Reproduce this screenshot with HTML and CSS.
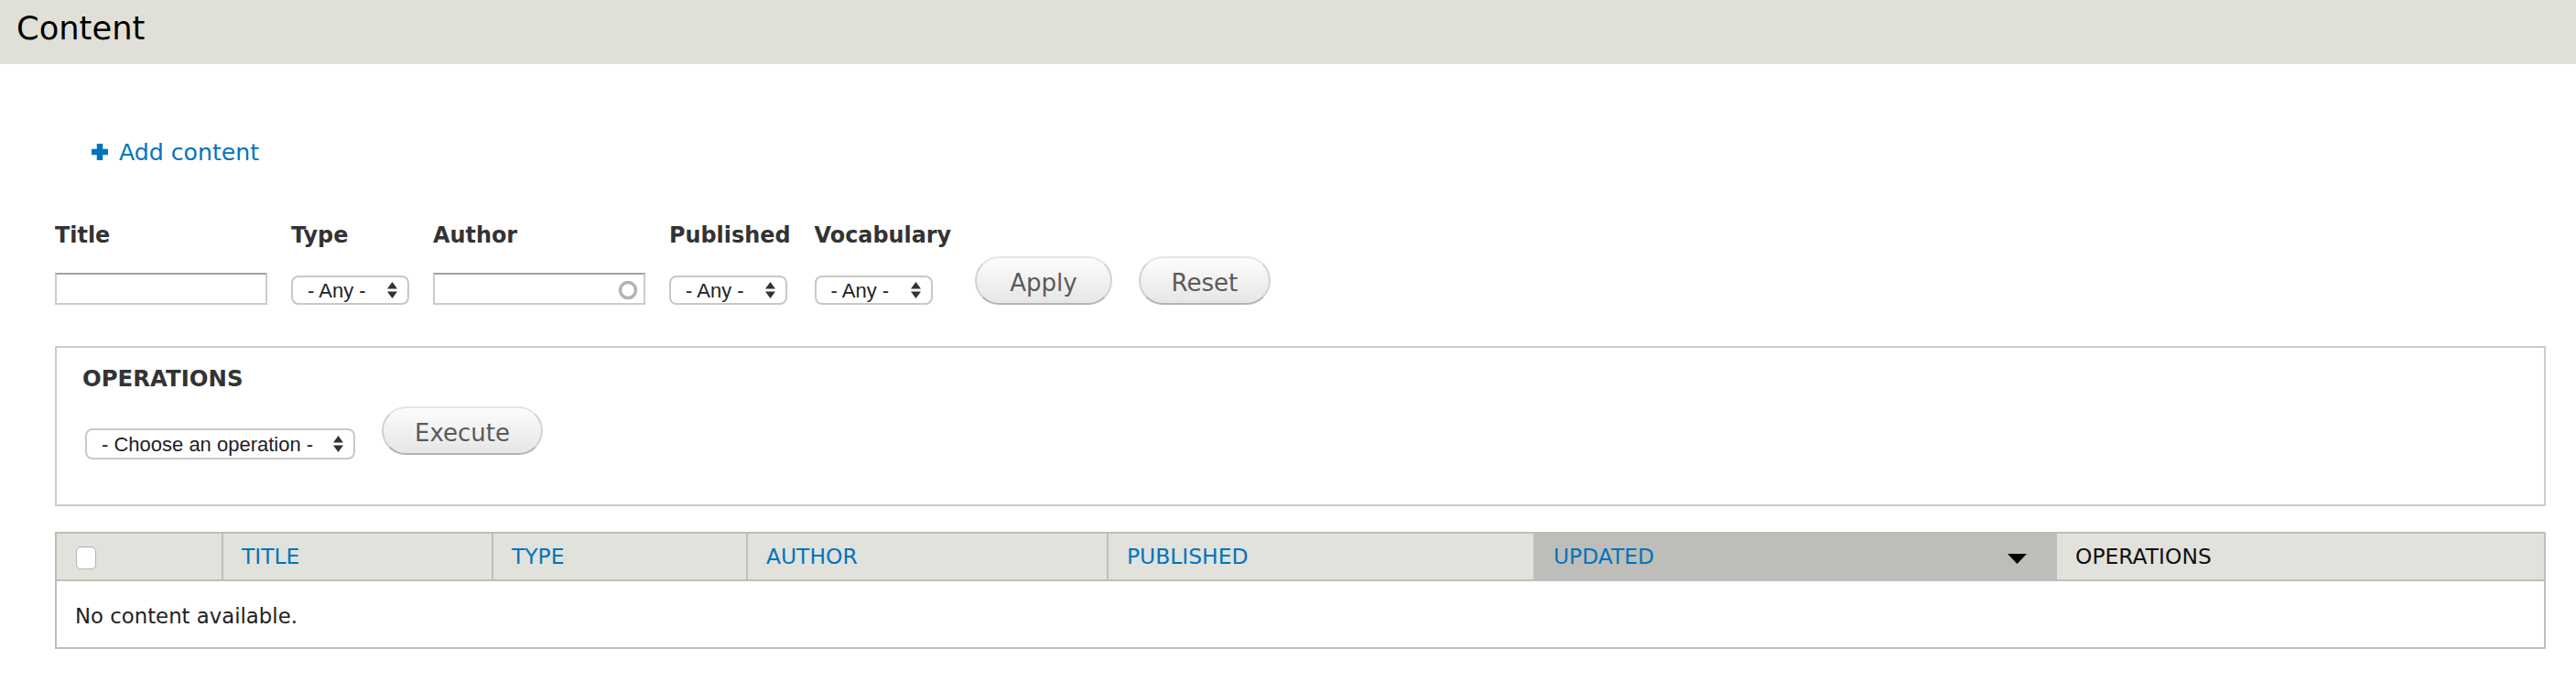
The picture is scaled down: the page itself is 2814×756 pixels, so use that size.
FILE: index.html
```html
<!DOCTYPE html>
<html lang="en">
<head>
<meta charset="utf-8">
<title>Content</title>
<link rel="stylesheet" href="styles.css">
</head>
<body>
<header class="branding">
  <h1 class="page-title">Content</h1>
</header>
<main class="page">
  <ul class="action-links">
    <li><a class="action-add" href="#"><svg class="plus-icon" width="18" height="18" viewBox="0 0 18 18" aria-hidden="true"><rect x="5.75" y="0" width="6.5" height="18"/><rect x="0" y="5.75" width="18" height="6.5"/></svg>Add content</a></li>
  </ul>

  <form class="filters">
    <div class="filter-row">
      <div class="widget">
        <label class="widget-label">Title</label>
        <div class="control"><input class="text-input" type="text"></div>
      </div>
      <div class="widget">
        <label class="widget-label">Type</label>
        <div class="control">
          <span class="select-wrap"><select class="select"><option>- Any -</option></select><svg class="select-arrows" width="11" height="18" viewBox="0 0 11 18" aria-hidden="true"><polygon points="0,7.5 5.5,0 11,7.5"/><polygon points="0,10.5 11,10.5 5.5,18"/></svg></span>
        </div>
      </div>
      <div class="widget">
        <label class="widget-label">Author</label>
        <div class="control">
          <span class="input-wrap"><input class="text-input" type="text"><svg class="throbber" width="24" height="24" viewBox="0 0 24 24" aria-hidden="true"><circle cx="12" cy="12" r="8.5"/></svg></span>
        </div>
      </div>
      <div class="widget">
        <label class="widget-label">Published</label>
        <div class="control">
          <span class="select-wrap"><select class="select"><option>- Any -</option></select><svg class="select-arrows" width="11" height="18" viewBox="0 0 11 18" aria-hidden="true"><polygon points="0,7.5 5.5,0 11,7.5"/><polygon points="0,10.5 11,10.5 5.5,18"/></svg></span>
        </div>
      </div>
      <div class="widget">
        <label class="widget-label">Vocabulary</label>
        <div class="control">
          <span class="select-wrap"><select class="select"><option>- Any -</option></select><svg class="select-arrows" width="11" height="18" viewBox="0 0 11 18" aria-hidden="true"><polygon points="0,7.5 5.5,0 11,7.5"/><polygon points="0,10.5 11,10.5 5.5,18"/></svg></span>
        </div>
      </div>
      <div class="widget widget-actions">
        <button class="button button-apply" type="button">Apply</button>
        <button class="button" type="button">Reset</button>
      </div>
    </div>
  </form>

  <section class="fieldset">
    <h2 class="fieldset-legend">Operations</h2>
    <div class="ops-row">
      <span class="select-wrap ops-select"><select class="select select-wide"><option>- Choose an operation -</option></select><svg class="select-arrows" width="11" height="18" viewBox="0 0 11 18" aria-hidden="true"><polygon points="0,7.5 5.5,0 11,7.5"/><polygon points="0,10.5 11,10.5 5.5,18"/></svg></span>
      <button class="button" type="button">Execute</button>
    </div>
  </section>

  <table class="content-table">
    <colgroup>
      <col class="col-check">
      <col class="col-title">
      <col class="col-type">
      <col class="col-author">
      <col class="col-published">
      <col class="col-updated">
      <col class="col-ops">
    </colgroup>
    <thead>
      <tr>
        <th><input class="check-all" type="checkbox"></th>
        <th><a href="#">Title</a></th>
        <th><a href="#">Type</a></th>
        <th><a href="#">Author</a></th>
        <th><a href="#">Published</a></th>
        <th class="sorted"><div class="sort-inner"><a href="#">Updated</a><svg class="sort-arrow" width="21" height="11" viewBox="0 0 21 11" aria-hidden="true"><polygon points="0,0 21,0 10.5,11"/></svg></div></th>
        <th class="plain">Operations</th>
      </tr>
    </thead>
    <tbody>
      <tr><td class="empty" colspan="7">No content available.</td></tr>
    </tbody>
  </table>
</main>
</body>
</html>
```

FILE: styles.css
```css
html, body {
  margin: 0;
  background: #fff;
}

body {
  font-family: "DejaVu Sans", "Liberation Sans", sans-serif;
  color: #333;
}

.branding {
  background: #e0e0d8;
  height: 70px;
  box-sizing: border-box;
  padding: 11px 18px 0;
}

.page-title {
  margin: 0;
  font-size: 35.3px;
  line-height: 40px;
  font-weight: normal;
  color: #000;
}

.page {
  padding: 0 33px 0 60px;
}

/* Action links */
.action-links {
  list-style: none;
  margin: 82px 0 0;
  padding: 0 0 0 40px;
  font-size: 25.2px;
  line-height: 30px;
}

.action-add {
  color: #0074bd;
  text-decoration: none;
}

.plus-icon {
  fill: #0074bd;
  margin-right: 12px;
  vertical-align: baseline;
}

/* Exposed filters */
.filters {
  margin: 60px 0 0;
}

.filter-row {
  display: flex;
  align-items: flex-start;
  gap: 26px;
}

.widget {
  display: flex;
  flex-direction: column;
}

.widget-label {
  font-size: 23.9px;
  line-height: 30px;
  font-weight: bold;
  color: #333;
  margin-bottom: 26px;
}

.control {
  height: 35px;
  display: flex;
  align-items: flex-end;
}

.text-input {
  width: 232px;
  height: 35px;
  box-sizing: border-box;
  margin: 0;
  padding: 0 8px;
  border: 2px solid #ccc;
  border-top-color: #a3a3a3;
  background: #fff;
  font: 22px "Liberation Sans", sans-serif;
  outline: none;
}

.input-wrap {
  position: relative;
  display: inline-block;
}

.throbber {
  position: absolute;
  right: 7px;
  top: calc(50% - 11px);
  fill: none;
  stroke: #b3b3b3;
  stroke-width: 3.5;
}

.select-wrap {
  position: relative;
  display: inline-block;
  line-height: 0;
}

.select {
  -webkit-appearance: none;
  appearance: none;
  width: 129px;
  height: 32px;
  box-sizing: border-box;
  margin: 0;
  padding: 0 0 0 16px;
  border: 2px solid #c8c8c8;
  border-radius: 8px;
  background: #fff;
  color: #222;
  font: 22px "Liberation Sans", sans-serif;
  outline: none;
}

.select-wide {
  width: 295px;
  height: 34px;
}

.select-arrows {
  position: absolute;
  right: 13px;
  top: calc(50% - 9px);
  fill: #333;
  pointer-events: none;
}

.widget-actions {
  align-self: flex-end;
  flex-direction: row;
  gap: 29px;
}

.button {
  height: 53px;
  box-sizing: border-box;
  margin: 0;
  padding: 5px 34px 0;
  border: 2px solid #e4e4e4;
  border-left-color: #d2d2d2;
  border-right-color: #d2d2d2;
  border-bottom-color: #b4b4b4;
  border-radius: 30px;
  background: linear-gradient(to bottom, #fcfcfc 0%, #f1f1f1 50%, #e6e6e6 100%);
  color: #5a5a5a;
  font-family: "DejaVu Sans", sans-serif;
  font-size: 26px;
  line-height: 44px;
  vertical-align: top;
}

.button-apply {
  padding-left: 36px;
  padding-right: 36px;
}

/* Operations fieldset */
.fieldset {
  margin-top: 45px;
  border: 2px solid #ccc;
  padding: 19px 26px 49px 28px;
}

.fieldset-legend {
  margin: 0;
  font-size: 24.4px;
  line-height: 30px;
  font-weight: bold;
  text-transform: uppercase;
  color: #333;
}

.ops-row {
  display: flex;
  align-items: flex-start;
  gap: 29px;
  margin-top: 15px;
}

.ops-select {
  margin: 24px 0 0 3px;
}

/* Table */
.content-table {
  margin-top: 28px;
  width: 100%;
  table-layout: fixed;
  border-collapse: collapse;
  border: 2px solid #bebfb9;
  font-size: 23.4px;
}

.col-check { width: 182px; }
.col-title { width: 295px; }
.col-type { width: 278px; }
.col-author { width: 394px; }
.col-published { width: 466px; }
.col-updated { width: 570px; }
.col-ops { width: 534px; }

.content-table th {
  background: #e1e2dc;
  border: 2px solid #bebfb9;
  padding: 0 20px;
  line-height: 50px;
  font-weight: normal;
  text-align: left;
  text-transform: uppercase;
  white-space: nowrap;
  color: #111;
}

.content-table th a {
  color: #0074bd;
  text-decoration: none;
}

.content-table th.sorted {
  background: #bdbeb9;
  border-color: #bdbeb9;
}

.sort-inner {
  display: flex;
  justify-content: space-between;
  align-items: center;
}

.sort-arrow {
  fill: #000;
  margin: 5px 11px 0 0;
}

.check-all {
  -webkit-appearance: none;
  appearance: none;
  width: 22px;
  height: 25px;
  box-sizing: border-box;
  margin: 0 0 0 1px;
  border: 1px solid #b5b5b5;
  border-radius: 5px;
  background: #fff;
  box-shadow: inset 0 1px 1px rgba(0, 0, 0, 0.08);
  vertical-align: middle;
}

.content-table td {
  border: 2px solid #bebfb9;
  padding: 10px 20px 6px;
  line-height: 56px;
  font-size: 22.8px;
  color: #222;
}
```
